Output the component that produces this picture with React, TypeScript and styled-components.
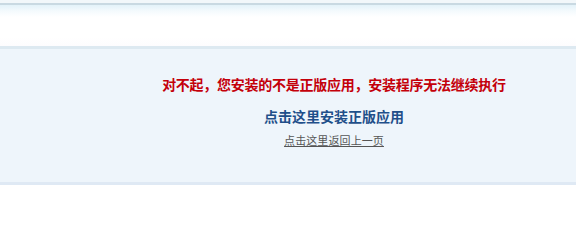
import React from "react";
import styled, { createGlobalStyle } from "styled-components";

const Global = createGlobalStyle`
  html, body { margin: 0; padding: 0; background: #ffffff; }
  body { font-family: "Noto Sans CJK SC", "Noto Sans", sans-serif; }
`;

const Page = styled.div`
  width: 576px;
  height: 243px;
  display: flex;
  flex-direction: column;
`;

const TopBar = styled.div`
  height: 3px;
  background: #f2f7fa;
  border-bottom: 2px solid #c9d9e2;
`;

const Header = styled.div`
  height: 41px;
  background: linear-gradient(to bottom, #e3f2f9 0px, #f4fafd 6px, #ffffff 12px, #ffffff 32px, #fdfcfe 100%);
  border-bottom: 3px solid #dde9f1;
`;

const Panel = styled.div`
  height: 136px;
  background: #eef5fb;
  border-bottom: 3px solid #dfe9f4;
  display: flex;
  flex-direction: column;
  align-items: center;
  padding-left: 92px;
  box-sizing: border-box;
`;

const ErrorText = styled.div`
  margin-top: 25px;
  color: #c4000a;
  font-size: 14px;
  font-weight: bold;
  line-height: 20px;
  letter-spacing: -0.25px;
  white-space: nowrap;
`;

const InstallLink = styled.a`
  margin-top: 12px;
  color: #1f4f8a;
  font-size: 14px;
  font-weight: bold;
  line-height: 20px;
  text-decoration: none;
`;

const BackLink = styled.a`
  margin-top: 6px;
  color: #555555;
  font-size: 11px;
  line-height: 16px;
  text-decoration: underline;
  letter-spacing: 0.1px;
`;

export default function App() {
  return (
    <>
      <Global />
      <Page>
        <TopBar />
        <Header />
        <Panel>
          <ErrorText>对不起，您安装的不是正版应用，安装程序无法继续执行</ErrorText>
          <InstallLink href="#">点击这里安装正版应用</InstallLink>
          <BackLink href="#">点击这里返回上一页</BackLink>
        </Panel>
      </Page>
    </>
  );
}
